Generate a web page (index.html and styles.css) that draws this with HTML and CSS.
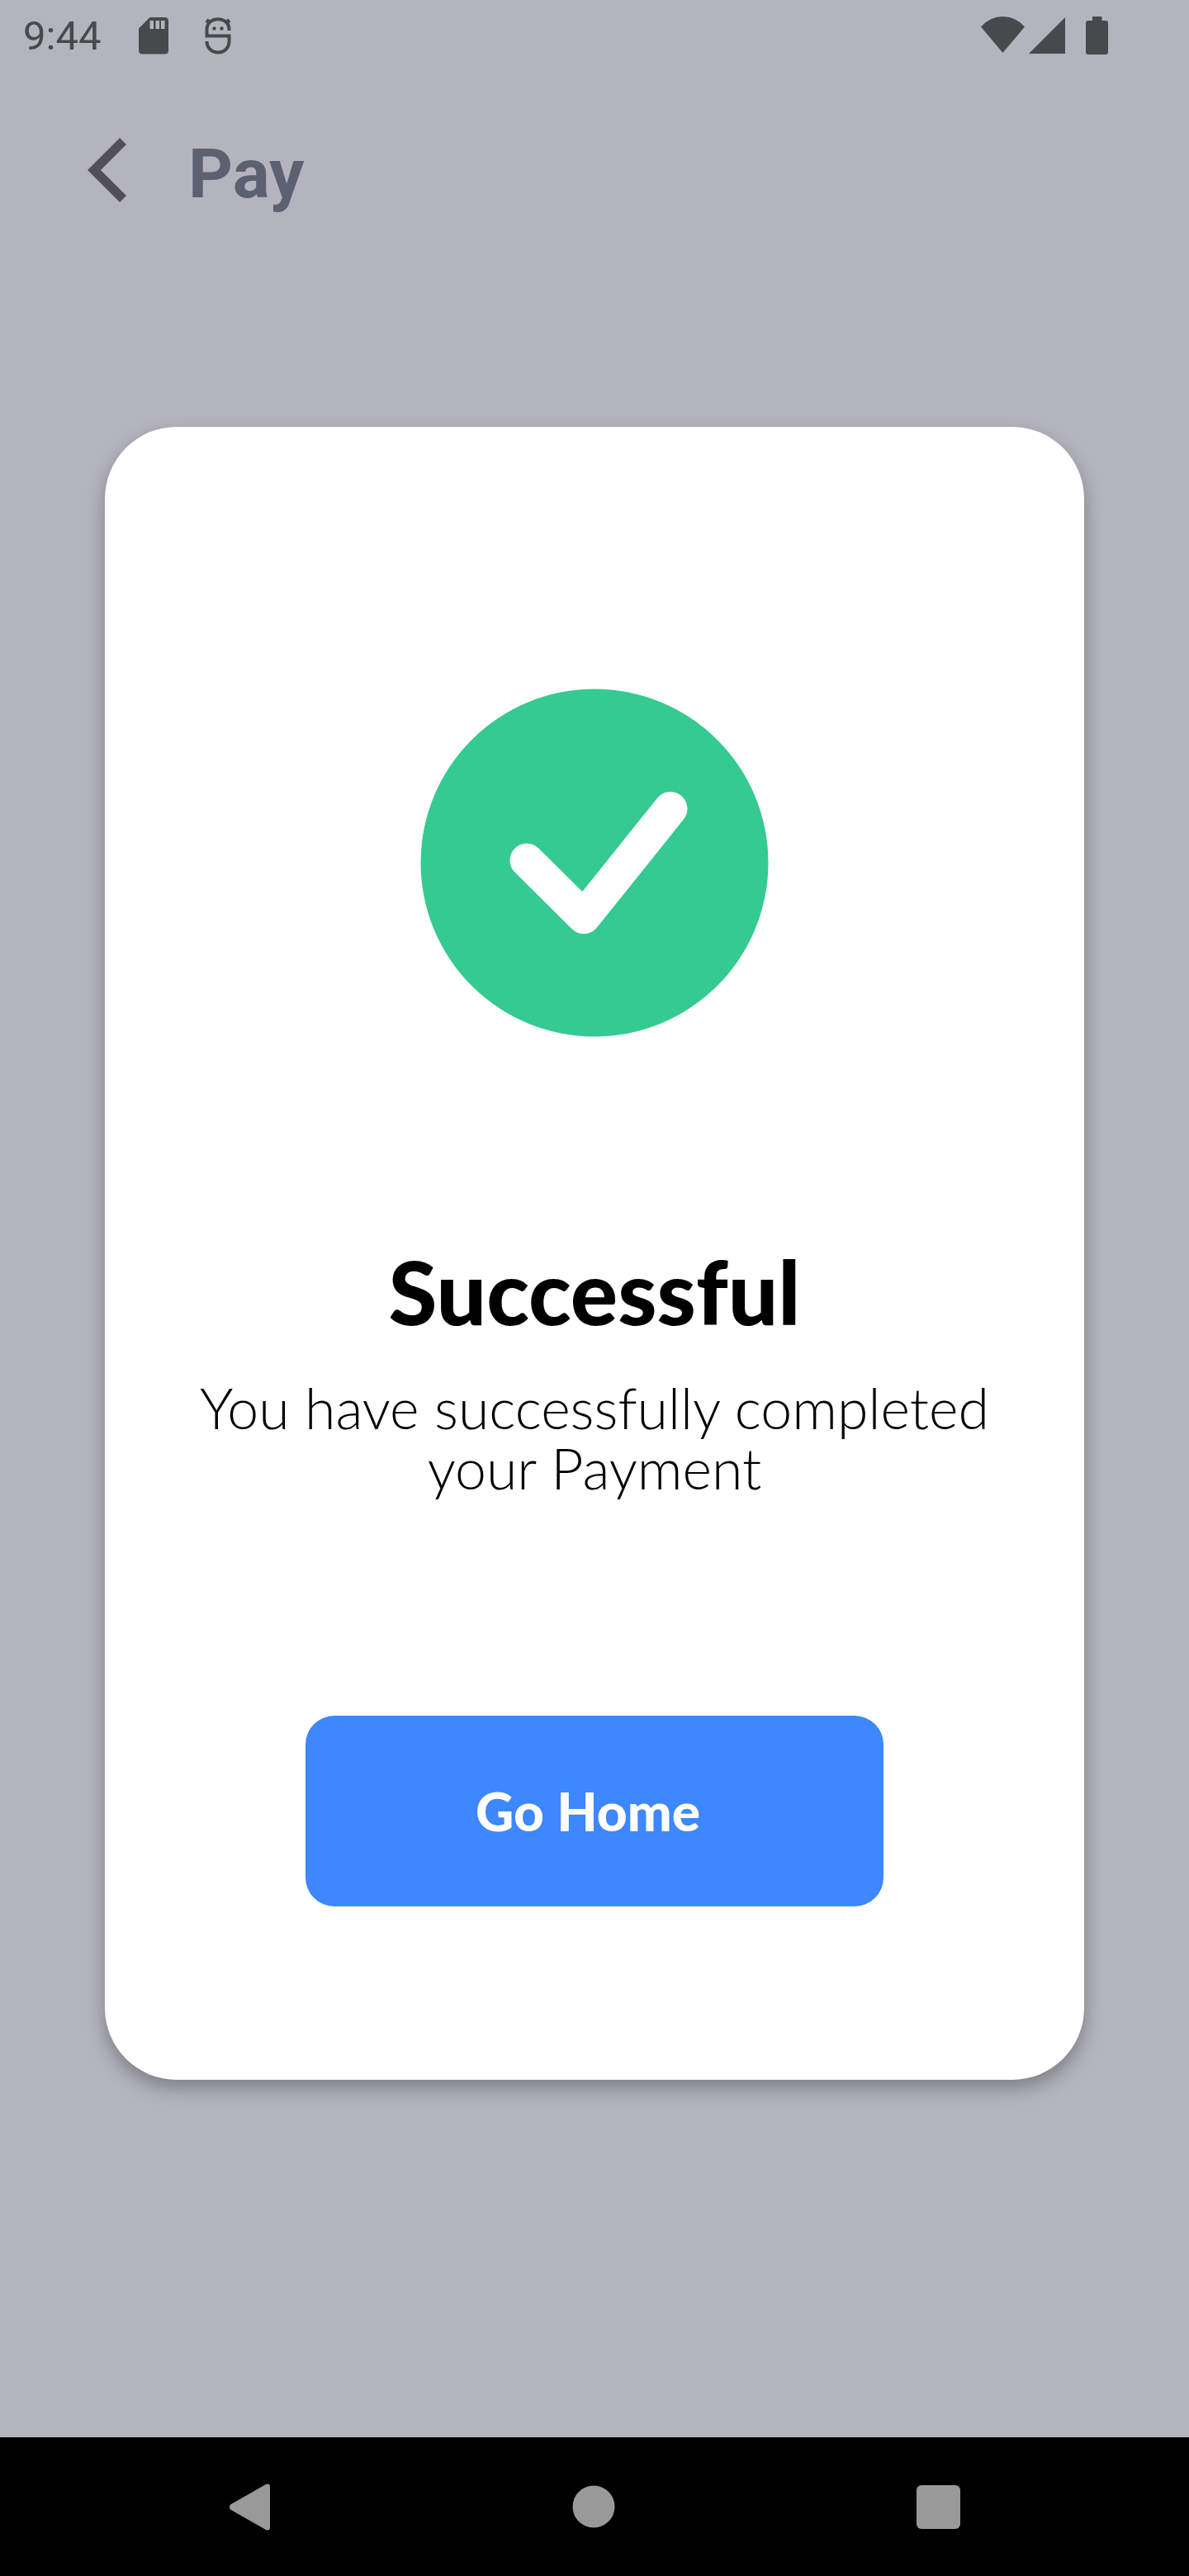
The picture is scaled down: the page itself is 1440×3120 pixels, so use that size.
FILE: index.html
```html
<!DOCTYPE html>
<html lang="en">
<head>
<meta charset="utf-8">
<meta name="viewport" content="width=device-width, initial-scale=1">
<title>Pay</title>
<link rel="stylesheet" href="styles.css">
</head>
<body>
<div class="status-bar">
  <time class="clock">9:44</time>
  <svg class="status-icon sd" width="36" height="45" viewBox="0 0 36 45" aria-hidden="true">
    <path fill="currentColor" fill-rule="evenodd" d="M13.500 0H31.500Q36 0 36 4.500V40Q36 44.500 31.500 44.500H4.500Q0 44.500 0 40V13.500ZM13.500 4V14H18V4ZM20.500 4V14H25V4ZM27 4V14H31.500V4Z"/>
  </svg>
  <svg class="status-icon" width="32" height="45" viewBox="0 0 32 45" fill="none" stroke="currentColor" stroke-width="4" aria-hidden="true">
    <path d="M29.500 16V15C29.500 7 23.500 2.200 16 2.200S2.500 7 2.500 15V22.500H29.500V29C29.500 37 23.500 42.500 16 42.500S2.500 37 2.500 29"/>
    <path d="M2 3.500L7 7M30 3.500L25 7" stroke-width="5"/>
    <circle cx="11.500" cy="13.500" r="2.200" fill="currentColor" stroke="none"/>
    <circle cx="20.500" cy="13.500" r="2.200" fill="currentColor" stroke="none"/>
  </svg>
  <div class="status-right">
    <svg width="102" height="46" viewBox="0 0 102 46" fill="currentColor" aria-hidden="true">
      <path d="M0 12.500Q11 0 26.500 0T53 12.500L26.500 44Z"/>
      <path d="M102 1V45H58Z"/>
    </svg>
    <svg width="27" height="46" viewBox="0 0 27 46" fill="currentColor" aria-hidden="true">
      <path d="M8 0H19.500V5H24Q27 5 27 8V43Q27 46 24 46H3Q0 46 0 43V8Q0 5 3 5H8Z"/>
    </svg>
  </div>
</div>

<header class="app-bar">
  <button class="back" type="button" aria-label="Back">
    <svg width="48" height="78" viewBox="0 0 48 78" aria-hidden="true"><path fill="currentColor" d="M0 39L39 0L47 8L16 39L47 70L39 78Z"/></svg>
  </button>
  <h1 class="title">Pay</h1>
</header>

<main class="content">
  <section class="dialog" role="dialog" aria-labelledby="result" aria-describedby="message">
    <svg class="check" width="422" height="422" viewBox="0 0 422 422" aria-hidden="true">
      <circle cx="211" cy="211" r="210.500" fill="#34ca91"/>
      <path d="M129 208L198 276.500L303 145.500" fill="none" stroke="#fff" stroke-width="41" stroke-linecap="round" stroke-linejoin="round"/>
    </svg>
    <h2 class="result" id="result">Successful</h2>
    <p class="message" id="message">You have successfully completed your Payment</p>
    <button class="home" type="button">Go Home</button>
  </section>
</main>

<nav class="nav-bar" aria-label="System">
  <button class="nav-key" type="button" aria-label="Back">
    <svg width="50" height="57" viewBox="0 0 50 57" aria-hidden="true"><path fill="currentColor" d="M1 25.500L44 1Q49 -1 49 4V53Q49 58 44 56L1 31.500Q-1 28.500 1 25.500Z"/></svg>
  </button>
  <button class="nav-key" type="button" aria-label="Home">
    <svg width="52" height="52" viewBox="0 0 52 52" aria-hidden="true"><circle cx="26" cy="26" r="25.500" fill="currentColor"/></svg>
  </button>
  <button class="nav-key" type="button" aria-label="Recent apps">
    <svg width="53" height="53" viewBox="0 0 53 53" aria-hidden="true"><rect width="53" height="53" rx="6" fill="currentColor"/></svg>
  </button>
</nav>
</body>
</html>
```
FILE: styles.css
```css
* {
  box-sizing: border-box;
}

body {
  display: flex;
  flex-direction: column;
  min-height: 100vh;
  margin: 0;
  background: #b4b4be;
  font-family: Lato, "Liberation Sans", sans-serif;
}

button {
  padding: 0;
  border: 0;
  background: none;
  color: inherit;
  font: inherit;
  cursor: pointer;
}

svg {
  display: block;
  flex: none;
}

.status-bar {
  display: flex;
  align-items: center;
  height: 86px;
  padding: 0 98px 0 28px;
  color: #48494c;
}

.clock {
  padding-top: 2px;
  font: 400 49px/58px Roboto, sans-serif;
}

.status-icon {
  margin-left: 44px;
}

.sd {
  margin-left: 46px;
}

.status-right {
  display: flex;
  gap: 25px;
  margin-left: auto;
}

.app-bar {
  display: flex;
  align-items: center;
  gap: 74px;
  height: 240px;
  padding: 0 106px;
}

.back {
  color: #504f5a;
}

.title {
  margin: 0;
  padding-top: 10px;
  color: #5d6070;
  font: 700 84px/100px Roboto, sans-serif;
}

.content {
  display: flex;
  flex: 1;
  align-items: flex-start;
  padding: 191px 127px;
}

.dialog {
  display: flex;
  flex: 1;
  flex-direction: column;
  align-items: center;
  padding: 317px 80px 210px;
  border-radius: 87px;
  background: #fff;
  color: #000;
  text-align: center;
  box-shadow: 0 10px 22px rgba(0, 0, 0, 0.3);
}

.result {
  margin: 245px 0 0;
  font: 900 107px/126px Lato, sans-serif;
}

.message {
  max-width: 1000px;
  margin: 41px 0 0;
  font: 300 68px/73px Lato, sans-serif;
}

.home {
  width: 700px;
  height: 231px;
  margin-top: 264px;
  padding-right: 16px;
  border-radius: 35px;
  background: #3d87ff;
  color: #fff;
  font: 900 64px/78px Lato, sans-serif;
}

.nav-bar {
  display: flex;
  align-items: center;
  justify-content: center;
  gap: 365px;
  height: 168px;
  background: #000;
  color: #999;
}

.nav-key {
  display: flex;
  align-items: center;
  justify-content: center;
}
```
